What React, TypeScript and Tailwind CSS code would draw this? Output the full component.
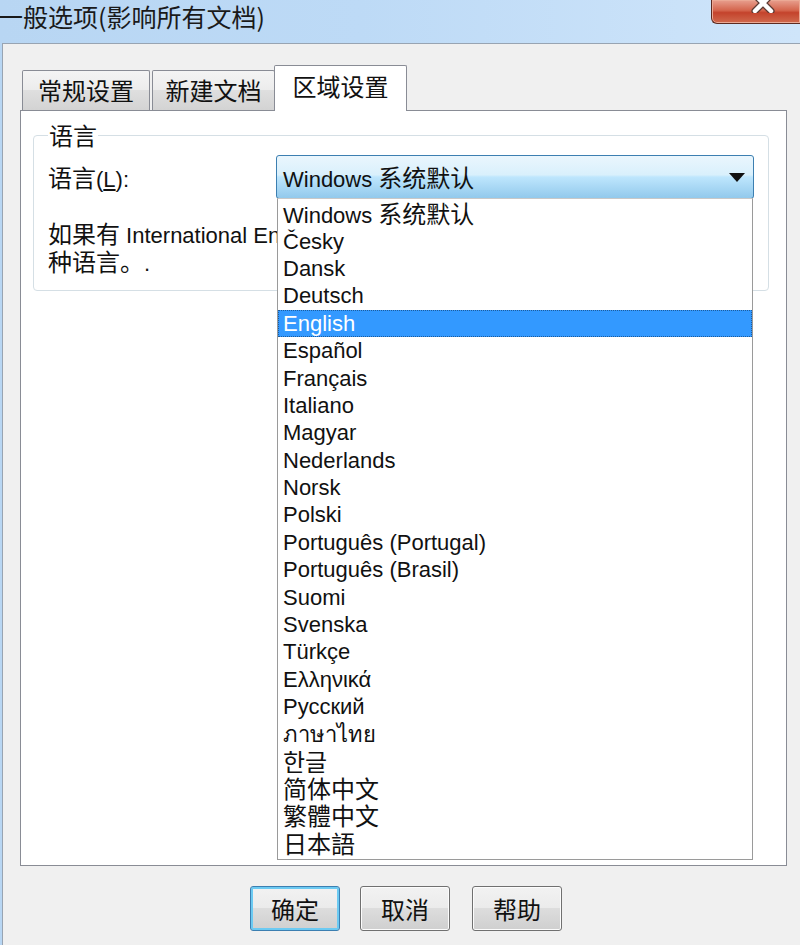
const items = [
  'Windows 系统默认',
  'Česky',
  'Dansk',
  'Deutsch',
  'English',
  'Español',
  'Français',
  'Italiano',
  'Magyar',
  'Nederlands',
  'Norsk',
  'Polski',
  'Português (Portugal)',
  'Português (Brasil)',
  'Suomi',
  'Svenska',
  'Türkçe',
  'Ελληνικά',
  'Русский',
  'ภาษาไทย',
  '한글',
  '简体中文',
  '繁體中文',
  '日本語',
];

// split mixed text so CJK runs get the larger (SimSun-like) size
function Mixed({ text }: { text: string }) {
  const parts = text.split(/([\u3000-\u9fff\uac00-\ud7af\uff00-\uffef]+)/).filter(Boolean);
  return (
    <span>
      {parts.map((p, i) =>
        /[\u3000-\u9fff\uac00-\ud7af\uff00-\uffef]/.test(p) ? (
          <span key={i} className="text-[24px] font-['Noto_Sans_CJK_SC',sans-serif]">{p}</span>
        ) : (
          <span key={i}>{p}</span>
        )
      )}
    </span>
  );
}

function Tab({ label, selected, className }: { label: string; selected?: boolean; className: string }) {
  return (
    <div
      className={
        selected
          ? `${className} h-[46px] -mb-px border border-b-0 border-[#898c95] bg-white flex justify-center pt-[6px] rounded-t-[2px]`
          : `${className} h-[40px] border border-b-0 border-[#898c95] bg-[linear-gradient(to_bottom,#f4f4f4_0%,#ececec_49%,#dfdfdf_50%,#d3d3d3_100%)] flex justify-center pt-[5px] rounded-t-[2px]`
      }
    >
      <span className="text-[24px] leading-[28px] font-['Noto_Sans_CJK_SC',sans-serif] text-[#111]">{label}</span>
    </div>
  );
}

function Button({ label, isDefault, className }: { label: string; isDefault?: boolean; className?: string }) {
  return (
    <div
      className={`${className ?? ''} w-[90px] h-[45px] rounded-[3px] border flex items-center justify-center bg-[linear-gradient(to_bottom,#f2f2f2_0%,#ebebeb_49%,#dddddd_50%,#cfcfcf_100%)] ${
        isDefault ? 'border-[#3c7fb1] shadow-[inset_0_0_0_2px_#6ccaf2]' : 'border-[#707070] shadow-[inset_0_0_0_1px_#fcfcfc]'
      }`}
    >
      <span className="text-[24px] leading-[28px] font-['Noto_Sans_CJK_SC',sans-serif] text-[#111]">{label}</span>
    </div>
  );
}

export default function App() {
  return (
    <div className="w-[800px] h-[945px] overflow-hidden flex flex-col bg-[linear-gradient(to_right,#b8d6f3_0%,#bddaf6_45%,#cfe5fa_100%)] font-['Liberation_Sans','Noto_Sans_CJK_SC',sans-serif] text-[22px] text-[#111]">
      {/* title bar */}
      <div className="h-[43px] shrink-0 relative">
        <div className="-ml-[2px] pt-[3px] text-[25px] leading-[26px] text-[#1a1a1a] font-['Noto_Sans_CJK_SC',sans-serif] whitespace-nowrap">
          一般选项(影响所有文档)
        </div>
        <div className="absolute right-0 top-0 w-[89px] h-[24px] rounded-bl-[6px] border border-t-0 border-r-0 border-[#5d2a20] bg-[linear-gradient(to_bottom,#e8a08f_0%,#d4654d_45%,#c4432c_55%,#d06a4e_100%)] shadow-[inset_0_0_0_1px_#eba995] flex justify-center">
          <svg width="26" height="20" viewBox="0 0 26 20" className="-mt-[7px] ml-[14px]">
            <path d="M5 2 L21 18 M21 2 L5 18" stroke="#5a3a33" strokeWidth="7" strokeLinecap="round" />
            <path d="M5 2 L21 18 M21 2 L5 18" stroke="#ffffff" strokeWidth="4.5" strokeLinecap="round" />
          </svg>
        </div>
      </div>

      {/* client area */}
      <div className="flex-1 ml-[2px] border-l border-t border-[#98a4b2] bg-[#f0f0f0] pl-[17px] pt-[21px]">
        {/* tabs */}
        <div className="relative z-10 flex items-end h-[45px] pl-[2px]">
          <Tab label="常规设置" className="w-[128px]" />
          <Tab label="新建文档" className="ml-[2px] w-[123px]" />
          <Tab label="区域设置" selected className="-ml-px w-[133px]" />
        </div>

        {/* tab panel */}
        <div className="w-[767px] h-[756px] border border-[#898c95] bg-white pt-[11px] pl-[12px]">
          <fieldset className="w-[736px] h-[169px] border border-[#d5dfe5] rounded-[4px] px-[14px] pt-[7px]">
            <legend className="px-[1px] text-[24px] leading-[26px] font-['Noto_Sans_CJK_SC',sans-serif]">语言</legend>

            <div className="flex items-center h-[44px]">
              <div className="w-[228px] whitespace-nowrap">
                <span className="text-[24px] font-['Noto_Sans_CJK_SC',sans-serif]">语言</span>
                <span>(<span className="underline underline-offset-2">L</span>):</span>
              </div>

              {/* combo box */}
              <div className="relative w-[478px] h-[44px]">
                <div className="h-full rounded-[3px] border border-[#3c7fb1] bg-[linear-gradient(to_bottom,#eaf6fd_0%,#d9f0fc_45%,#bee6fd_50%,#92c9ec_100%)] flex items-center pl-[6px] pr-[8px]">
                  <span className="flex-1 whitespace-nowrap">
                    <Mixed text="Windows 系统默认" />
                  </span>
                  <svg width="16" height="9" viewBox="0 0 16 9">
                    <path d="M0 0 H16 L8 9 Z" fill="#111" />
                  </svg>
                </div>

                {/* open drop-down list */}
                <div className="absolute left-[1px] top-[43px] w-[476px] h-[662px] z-20 bg-white border border-[#9a9a9a] border-t-[#c8c8c8] py-[1px]">
                  {items.map((it) => {
                    const sel = it === 'English';
                    return (
                      <div
                        key={it}
                        className={`h-[27.4px] flex items-center pl-[5px] whitespace-nowrap leading-[27px] ${
                          sel ? 'bg-[#3399ff] text-white outline outline-1 outline-dotted outline-[#1d5c9c] -outline-offset-1' : ''
                        }`}
                      >
                        <Mixed text={it} />
                      </div>
                    );
                  })}
                </div>
              </div>
            </div>

            <div className="mt-[21px] w-[690px] overflow-hidden whitespace-nowrap leading-[25px]">
              <Mixed text="如果有 International English Language Pack，可以在这里选择多" />
            </div>
            <div className="whitespace-nowrap leading-[25px]">
              <Mixed text="种语言。" />.
            </div>
          </fieldset>
        </div>

        {/* buttons */}
        <div className="flex mt-[20px] pl-[230px]">
          <Button label="确定" isDefault />
          <Button label="取消" className="ml-[20px]" />
          <Button label="帮助" className="ml-[22px]" />
        </div>
      </div>
    </div>
  );
}
